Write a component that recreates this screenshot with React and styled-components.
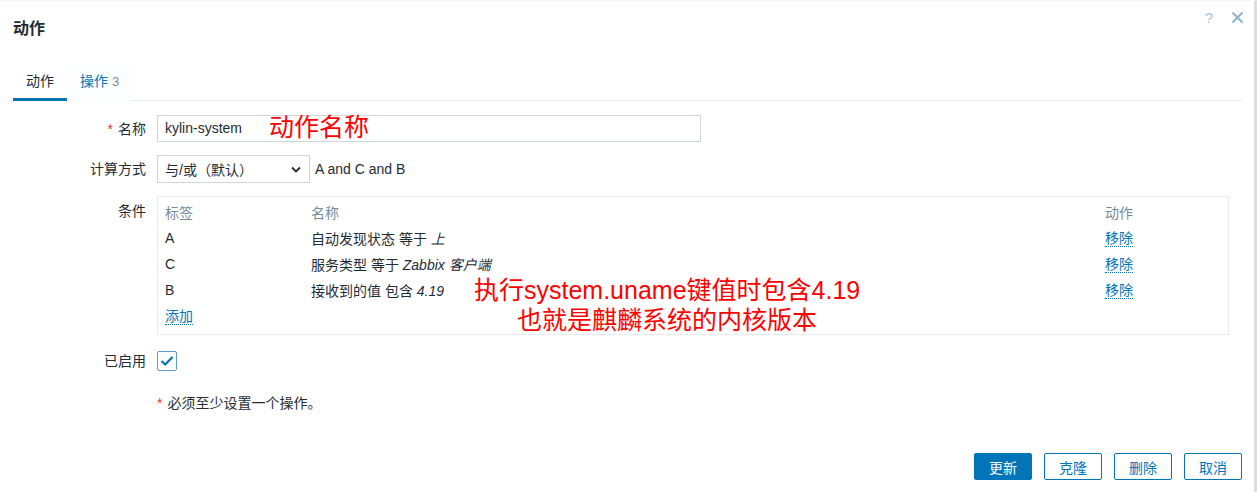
import React from 'react'
import styled, { createGlobalStyle } from 'styled-components'

const GlobalStyle = createGlobalStyle`
  * { box-sizing: border-box; }
  body {
    margin: 0;
    font-family: "Liberation Sans", "Noto Sans CJK SC", sans-serif;
    font-size: 14px;
    color: #1f2c33;
    background: #fff;
  }
`

const Dialog = styled.div`
  position: relative;
  width: 1257px;
  height: 492px;
  display: flex;
  flex-direction: column;
  padding: 0 12px 12px 13px;
  border-top: 1px dotted #e8ebed;
  border-right: 3px solid #d8dee2;
`

const Header = styled.div`
  height: 51px;
  display: flex;
  align-items: center;
  justify-content: space-between;
  h1 {
    margin: 0;
    font-size: 16px;
    font-weight: bold;
    color: #1f2c33;
  }
`

const HeaderTools = styled.div`
  display: flex;
  align-items: center;
  gap: 18px;
  margin-top: -18px;
  margin-right: -2px;
  span {
    color: #a9c3d6;
    font-size: 15px;
  }
`

const Tabs = styled.div`
  margin-top: 10px;
  display: flex;
  border-bottom: 1px solid #e3e8eb;
`

const Tab = styled.div`
  padding: 10px 13px 7px;
  line-height: 18px;
  margin-bottom: -1px;
  border-bottom: 3px solid ${({ $active }) => ($active ? '#0275b8' : 'transparent')};
  color: ${({ $active }) => ($active ? '#1f2c33' : '#0275b8')};
  background: ${({ $active }) => ($active ? 'transparent' : '#fbfdfe')};
  small {
    font-size: 13px;
    color: #768d99;
    margin-left: 4px;
  }
`

const Form = styled.div`
  margin-top: 14px;
  display: grid;
  grid-template-columns: 133px 1fr;
  column-gap: 11px;
  row-gap: 13px;
  align-items: center;
`

const Label = styled.div`
  text-align: right;
  align-self: ${({ $top }) => ($top ? 'start' : 'center')};
  padding-top: ${({ $top }) => ($top ? '6px' : '0')};
  margin-top: ${({ $mt }) => $mt || 0}px;
  line-height: 18px;
`

const Req = styled.span`
  color: #e33734;
  margin-right: 5px;
`

const Field = styled.div`
  position: relative;
  display: flex;
  align-items: center;
  gap: 5px;
  margin-top: ${({ $mt }) => $mt || 0}px;
`

const TextInput = styled.div`
  width: 544px;
  height: 27px;
  border: 1px solid #cfd6da;
  padding: 0 7px;
  line-height: 25px;
`

const Select = styled.div`
  width: 153px;
  height: 28px;
  border: 1px solid #cfd6da;
  padding: 0 8px 0 7px;
  display: flex;
  align-items: center;
  justify-content: space-between;
`

const Annotation = styled.div`
  position: absolute;
  color: #ff0000;
  font-size: 25px;
  line-height: 30px;
  text-align: center;
  white-space: nowrap;
`

const CondTable = styled.div`
  position: relative;
  width: 1072px;
  border: 1px solid #e8ecee;
  padding: 2px 7px 5px;
  display: grid;
  grid-template-columns: 146px 794px 1fr;
  grid-auto-rows: 26px;
  align-items: center;
`

const HeadCell = styled.div`
  color: #768d99;
`

const Cell = styled.div`
  em {
    font-style: italic;
  }
`

const Link = styled.span`
  color: #0275b8;
  border-bottom: 1px dotted #0275b8;
  line-height: 16px;
  display: inline-block;
`

const CheckBox = styled.div`
  width: 20px;
  height: 20px;
  border: 1px solid #5d9cc9;
  border-radius: 2px;
  display: flex;
  align-items: center;
  justify-content: center;
`

const Note = styled.div`
  grid-column: 2;
  margin-top: 10px;
  line-height: 18px;
`

const Footer = styled.div`
  margin-top: auto;
  display: flex;
  justify-content: flex-end;
  gap: 12px;
`

const Button = styled.div`
  min-width: 58px;
  height: 27px;
  padding: 0 10px;
  border: 1px solid #0275b8;
  border-radius: 2px;
  display: flex;
  align-items: center;
  justify-content: center;
  background: ${({ $primary }) => ($primary ? '#0275b8' : '#fff')};
  color: ${({ $primary }) => ($primary ? '#fff' : '#0275b8')};
`

const conditions = [
  { tag: 'A', name: <>自动发现状态 等于 <em>上</em></> },
  { tag: 'C', name: <>服务类型 等于 <em>Zabbix 客户端</em></> },
  { tag: 'B', name: <>接收到的值 包含 <em>4.19</em></> },
]

export default function App() {
  return (
    <Dialog>
      <GlobalStyle />
      <Header>
        <h1>动作</h1>
        <HeaderTools>
          <span>?</span>
          <svg width="13" height="13" viewBox="0 0 13 13">
            <path d="M1.5 1.5 L11.5 11.5 M11.5 1.5 L1.5 11.5" stroke="#8fb3cc" strokeWidth="2" />
          </svg>
        </HeaderTools>
      </Header>

      <Tabs>
        <Tab $active>动作</Tab>
        <Tab>操作<small>3</small></Tab>
      </Tabs>

      <Form>
        <Label><Req>*</Req>名称</Label>
        <Field>
          <TextInput>kylin-system</TextInput>
          <Annotation style={{ left: 112, top: -3 }}>动作名称</Annotation>
        </Field>

        <Label>计算方式</Label>
        <Field>
          <Select>
            <span>与/或（默认）</span>
            <svg width="10" height="7" viewBox="0 0 10 7">
              <path d="M1 1.5 L5 5.5 L9 1.5" fill="none" stroke="#1f2c33" strokeWidth="1.8" />
            </svg>
          </Select>
          <span>A and C and B</span>
        </Field>

        <Label $top>条件</Label>
        <CondTable>
          <HeadCell>标签</HeadCell>
          <HeadCell>名称</HeadCell>
          <HeadCell>动作</HeadCell>
          {conditions.map((c) => (
            <React.Fragment key={c.tag}>
              <Cell>{c.tag}</Cell>
              <Cell>{c.name}</Cell>
              <Cell><Link>移除</Link></Cell>
            </React.Fragment>
          ))}
          <Cell><Link>添加</Link></Cell>
          <Annotation style={{ left: 316, top: 78 }}>
            执行system.uname键值时包含4.19
            <br />
            也就是麒麟系统的内核版本
          </Annotation>
        </CondTable>

        <Label $mt={3}>已启用</Label>
        <Field $mt={3}>
          <CheckBox>
            <svg width="14" height="12" viewBox="0 0 14 12">
              <path d="M1.5 6 L5.2 9.5 L12.5 2" fill="none" stroke="#0275b8" strokeWidth="2.2" />
            </svg>
          </CheckBox>
        </Field>

        <Note><Req>*</Req>必须至少设置一个操作。</Note>
      </Form>

      <Footer>
        <Button $primary>更新</Button>
        <Button>克隆</Button>
        <Button>删除</Button>
        <Button>取消</Button>
      </Footer>
    </Dialog>
  )
}
